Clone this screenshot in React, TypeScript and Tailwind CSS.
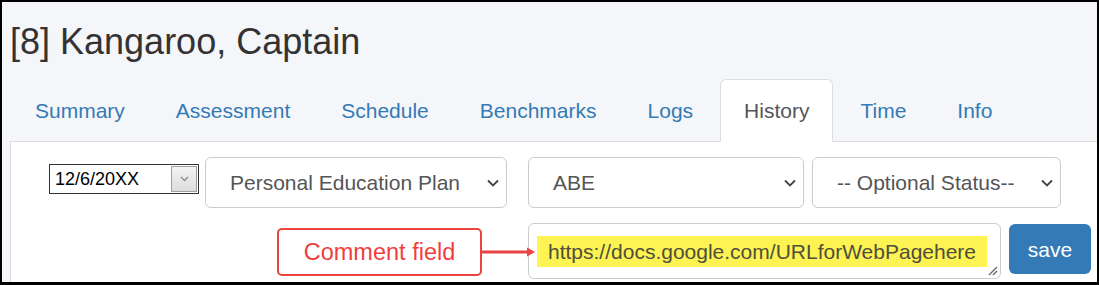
import React from "react";

function Chevron() {
  return (
    <svg width="12" height="8" viewBox="0 0 12 8" className="shrink-0">
      <polyline points="1,1.5 6,6.5 11,1.5" fill="none" stroke="#444" strokeWidth="1.8" />
    </svg>
  );
}

function Select({ label, className }: { label: string; className: string }) {
  return (
    <div
      className={`h-[51px] border border-[#ccc] rounded-[6px] bg-white flex items-center justify-between pl-[24px] pr-[7px] text-[21px] leading-[21px] text-[#555] ${className}`}
    >
      <span>{label}</span>
      <Chevron />
    </div>
  );
}

export default function App() {
  const tabs = ["Summary", "Assessment", "Schedule", "Benchmarks", "Logs", "History", "Time", "Info"];
  return (
    <div className="w-[1099px] h-[285px] box-border border-2 border-b-[3px] border-black bg-[#f4f6f9] overflow-hidden font-['Liberation_Sans',Arial,sans-serif]">
      <div className="pl-[8px] pt-[22px]">
        <h1 className="text-[36px] leading-[36px] h-[36px] text-[#333] font-normal">[8] Kangaroo, Captain</h1>
        <div className="mt-[19px] flex border-b border-[#ddd] pl-px">
          {tabs.map((t) => {
            const active = t === "History";
            return (
              <div
                key={t}
                className={
                  active
                    ? "h-[63px] -mb-px mr-[3px] px-[23px] border border-[#ddd] border-b-transparent rounded-t-[6px] bg-white flex items-center text-[21px] leading-[21px] text-[#555]"
                    : "h-[63px] -mb-px mr-[3px] px-[23px] border border-transparent rounded-t-[6px] flex items-center text-[21px] leading-[21px] text-[#337ab7]"
                }
              >
                {t}
              </div>
            );
          })}
        </div>
        <div className="bg-white border-l border-[#ddd] h-[150px]">
          <div className="flex items-start pt-[15px] pl-[38px]">
            <div className="mt-[7px] w-[150px] h-[30px] border border-[#333] bg-white flex items-center justify-between pl-[5px] pr-px text-[18px] leading-[18px] text-black">
              <span>12/6/20XX</span>
              <div className="w-[26px] h-[26px] border border-[#a0a0a0] bg-gradient-to-b from-[#f4f4f4] to-[#dcdcdc] flex items-center justify-center">
                <svg width="9" height="6" viewBox="0 0 9 6">
                  <polyline points="1,1 4.5,4.5 8,1" fill="none" stroke="#8a8a8a" strokeWidth="1.3" />
                </svg>
              </div>
            </div>
            <Select label="Personal Education Plan" className="ml-[6px] w-[302px]" />
            <Select label="ABE" className="ml-[21px] w-[276px]" />
            <Select label="-- Optional Status--" className="ml-[8px] w-[249px]" />
          </div>
          <div className="flex items-start mt-[15px]">
            <div className="ml-[266px] mt-[5px] w-[205px] h-[48px] border-2 border-[#ea4344] rounded-[5px] bg-white flex items-center justify-center text-[23.5px] leading-[24px] text-[#f03e3e]">
              Comment field
            </div>
            <svg width="46" height="48" viewBox="0 0 46 48" className="mt-[5px] overflow-visible relative z-10">
              <line x1="0" y1="24" x2="47" y2="24" stroke="#ea4344" strokeWidth="3" />
              <polygon points="45,19.5 53,24 45,28.5" fill="#ea4344" />
            </svg>
            <div className="relative w-[473px] h-[56px] border border-[#ccc] rounded-[6px] bg-white pl-[8px] pt-[12px]">
              <span className="inline-block h-[31px] leading-[31px] px-[11px] bg-[#fdf352] text-[21px] text-[#4f4f3c]">
                https://docs.google.com/URLforWebPagehere
              </span>
              <svg width="10" height="10" viewBox="0 0 10 10" className="absolute right-[2px] bottom-[2px]">
                <line x1="9" y1="1" x2="1" y2="9" stroke="#666" strokeWidth="1.2" />
                <line x1="9" y1="5" x2="5" y2="9" stroke="#666" strokeWidth="1.2" />
              </svg>
            </div>
            <div className="ml-[8px] mt-px w-[82px] h-[50px] bg-[#337ab7] rounded-[6px] flex items-center justify-center text-[21px] leading-[21px] text-white">
              save
            </div>
          </div>
        </div>
      </div>
    </div>
  );
}
